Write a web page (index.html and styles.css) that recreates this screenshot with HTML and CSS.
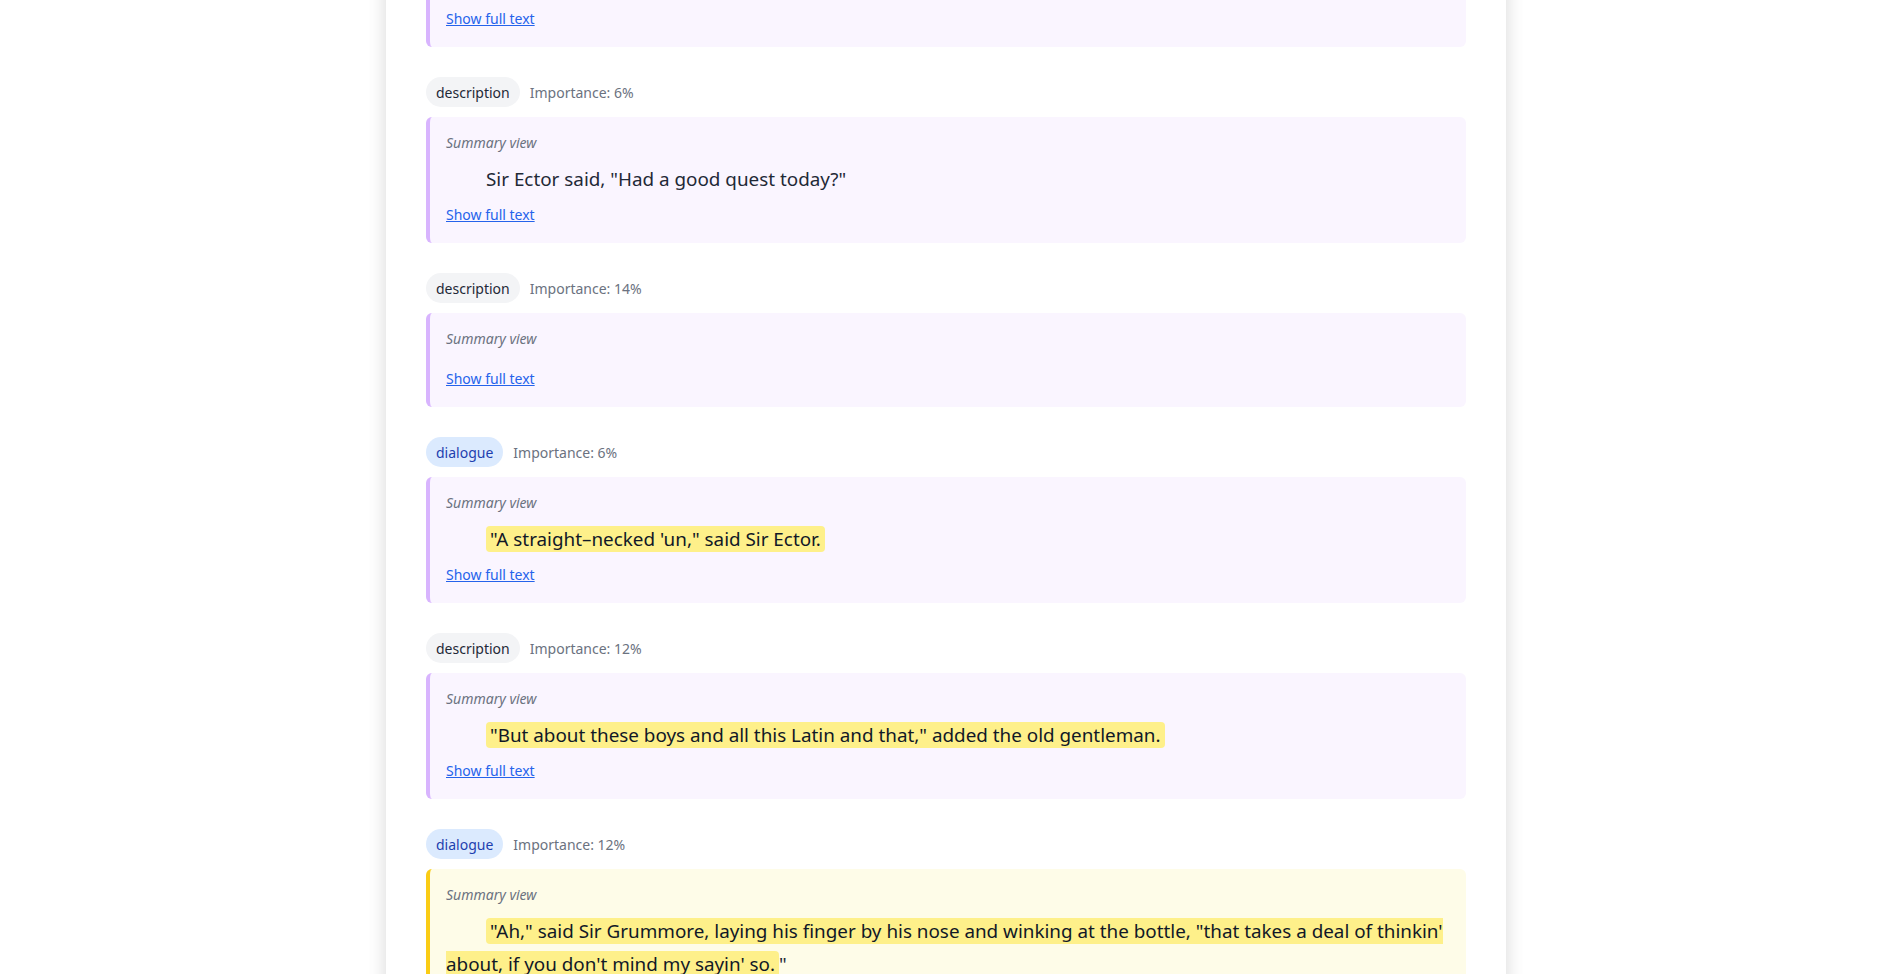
FILE: index.html
```html
<!DOCTYPE html>
<html lang="en">
<head>
<meta charset="utf-8">
<title>Summary view</title>
<link rel="stylesheet" href="styles.css">
</head>
<body>
<div class="page">
  <main class="panel">
    <section class="chunk">
      <div class="meta"><span class="tag tag-description">description</span><span class="importance">Importance: 8%</span></div>
      <div class="view">
        <div class="view-label">Summary view</div>
        <p class="view-text"></p>
        <a class="view-link" href="#">Show full text</a>
      </div>
    </section>

    <section class="chunk">
      <div class="meta"><span class="tag tag-description">description</span><span class="importance">Importance: 6%</span></div>
      <div class="view">
        <div class="view-label">Summary view</div>
        <p class="view-text">Sir Ector said, "Had a good quest today?"</p>
        <a class="view-link" href="#">Show full text</a>
      </div>
    </section>

    <section class="chunk">
      <div class="meta"><span class="tag tag-description">description</span><span class="importance">Importance: 14%</span></div>
      <div class="view">
        <div class="view-label">Summary view</div>
        <p class="view-text"></p>
        <a class="view-link" href="#">Show full text</a>
      </div>
    </section>

    <section class="chunk">
      <div class="meta"><span class="tag tag-dialogue">dialogue</span><span class="importance">Importance: 6%</span></div>
      <div class="view">
        <div class="view-label">Summary view</div>
        <p class="view-text"><mark class="hl">"A straight–necked 'un," said Sir Ector.</mark></p>
        <a class="view-link" href="#">Show full text</a>
      </div>
    </section>

    <section class="chunk">
      <div class="meta"><span class="tag tag-description">description</span><span class="importance">Importance: 12%</span></div>
      <div class="view">
        <div class="view-label">Summary view</div>
        <p class="view-text"><mark class="hl">"But about these boys and all this Latin and that," added the old gentleman.</mark></p>
        <a class="view-link" href="#">Show full text</a>
      </div>
    </section>

    <section class="chunk">
      <div class="meta"><span class="tag tag-dialogue">dialogue</span><span class="importance">Importance: 12%</span></div>
      <div class="view view-active">
        <div class="view-label">Summary view</div>
        <p class="view-text"><mark class="hl">"Ah," said Sir Grummore, laying his finger by his nose and winking at the bottle, "that takes a deal of thinkin' about, if you don't mind my sayin' so.</mark>"</p>
        <a class="view-link" href="#">Show full text</a>
      </div>
    </section>
  </main>
</div>
</body>
</html>
```

FILE: styles.css
```css
* { box-sizing: border-box; }

html, body {
  margin: 0;
  padding: 0;
  background: #ffffff;
}

body {
  font-family: "Segoe UI", "Noto Sans", Arial, sans-serif;
  color: #1f2937;
  overflow: hidden;
}

.page {
  display: flex;
  justify-content: center;
  padding-left: 7px;
}

.panel {
  width: 1120px;
  margin-top: -87px;
  padding: 0 40px 40px;
  background: #ffffff;
  box-shadow: 0 0 18px rgba(0, 0, 0, 0.10), 0 8px 20px rgba(0, 0, 0, 0.06);
  display: flex;
  flex-direction: column;
  gap: 30px;
}

.chunk {
  display: flex;
  flex-direction: column;
  gap: 10px;
}

.meta {
  display: flex;
  align-items: center;
  gap: 10px;
  height: 30px;
}

.tag {
  display: inline-block;
  height: 30px;
  padding: 1px 10px 0;
  border-radius: 15px;
  font-size: 14px;
  line-height: 29px;
}

.tag-description {
  background: #f3f4f6;
  color: #1f2937;
}

.tag-dialogue {
  background: #dbeafe;
  color: #1e40af;
}

.importance {
  font-size: 14px;
  color: #6b7280;
}

.view {
  display: flex;
  flex-direction: column;
  align-items: flex-start;
  padding: 16px;
  background: #faf5ff;
  border-left: 4px solid #d8b4fe;
  border-radius: 6px;
}

.view-active {
  background: #fefce8;
  border-left-color: #facc15;
}

.view-label {
  font-size: 14px;
  line-height: 20px;
  font-style: italic;
  color: #6b7280;
  margin-bottom: 10px;
}

.view-text {
  align-self: stretch;
  margin: 0 0 7px;
  font-size: 18.85px;
  line-height: 33px;
  text-indent: 40px;
  color: #1f2937;
}

.view-text:empty {
  margin-bottom: 8px;
}

.hl {
  background: #fef08a;
  color: #111827;
  padding: 0 4px;
  border-radius: 4px;
}

.view-link {
  font-size: 14px;
  line-height: 24px;
  color: #2563eb;
  text-decoration: underline;
}
```
